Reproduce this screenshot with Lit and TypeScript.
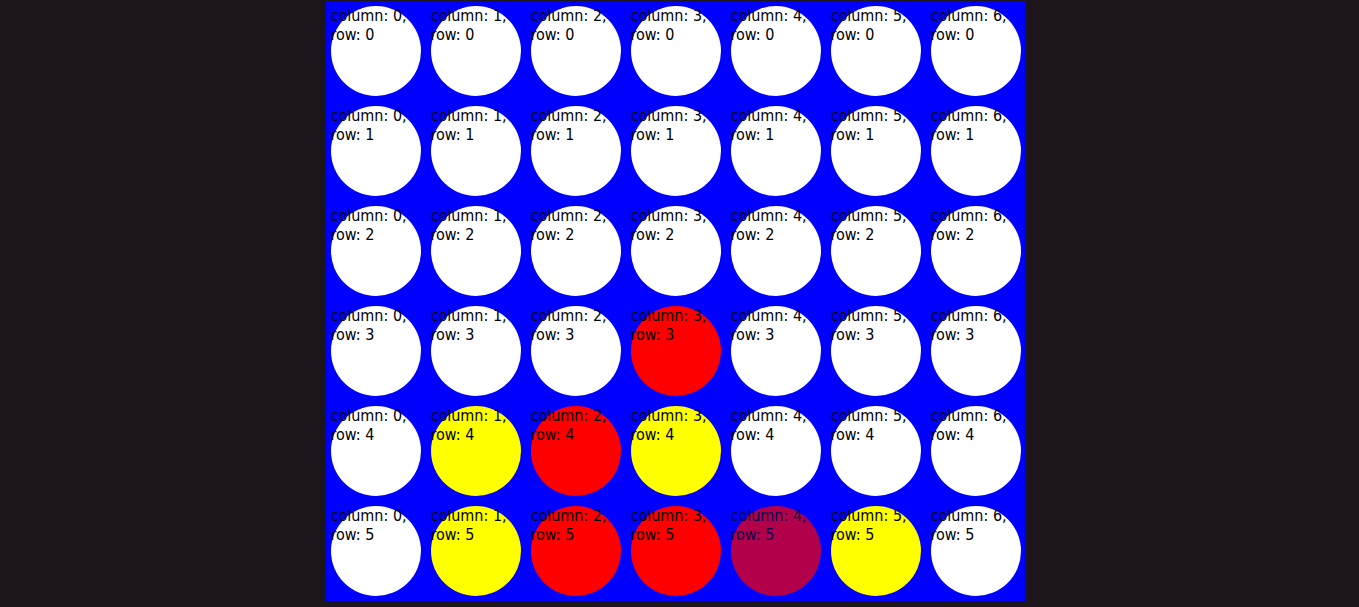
import { LitElement, html, css } from "lit";
import { customElement, property, state } from "lit/decorators.js";
import { classMap } from "lit/directives/class-map.js";

type Disc = "empty" | "red" | "yellow";

const LAYOUT = [
  ".......",
  ".......",
  ".......",
  "...R...",
  ".YRY...",
  ".YRRRY.",
];

const DISCS: Record<string, Disc> = { ".": "empty", R: "red", Y: "yellow" };

@customElement("board-cell")
class BoardCell extends LitElement {
  @property({ type: Number }) column = 0;
  @property({ type: Number }) row = 0;
  @property() disc: Disc = "empty";
  @property({ type: Boolean }) faded = false;

  static styles = css`
    :host {
      display: block;
      padding: 5px;
    }
    .disc {
      width: 90px;
      height: 90px;
      border-radius: 50%;
      background: #fff;
      color: #000;
    }
    .red {
      background: #f00;
    }
    .yellow {
      background: #ff0;
    }
    .faded {
      opacity: 0.7;
    }
  `;

  render() {
    const classes = {
      disc: true,
      red: this.disc === "red",
      yellow: this.disc === "yellow",
      faded: this.faded,
    };
    const label = `column: ${this.column}, row: ${this.row}`;
    return html`<div class=${classMap(classes)}>${label}</div>`;
  }
}

@customElement("app-root")
class AppRoot extends LitElement {
  @state() private rows = LAYOUT;
  @state() private latest = { column: 4, row: 5 };

  static styles = css`
    :host {
      display: flex;
      justify-content: center;
      align-items: flex-start;
      box-sizing: border-box;
      min-height: 100vh;
      padding: 1px 8px 5px 0;
      background: #1c161c;
      font: 16px/19px Tahoma, "DejaVu Sans Condensed", "Noto Sans", sans-serif;
    }
    .board {
      display: grid;
      grid-template-columns: repeat(7, max-content);
      background: #00f;
    }
  `;

  render() {
    return html`<div class="board">
      ${this.rows.map((line, row) =>
        [...line].map(
          (mark, column) => html`<board-cell
            .column=${column}
            .row=${row}
            .disc=${DISCS[mark]}
            .faded=${column === this.latest.column && row === this.latest.row}
          ></board-cell>`
        )
      )}
    </div>`;
  }
}
